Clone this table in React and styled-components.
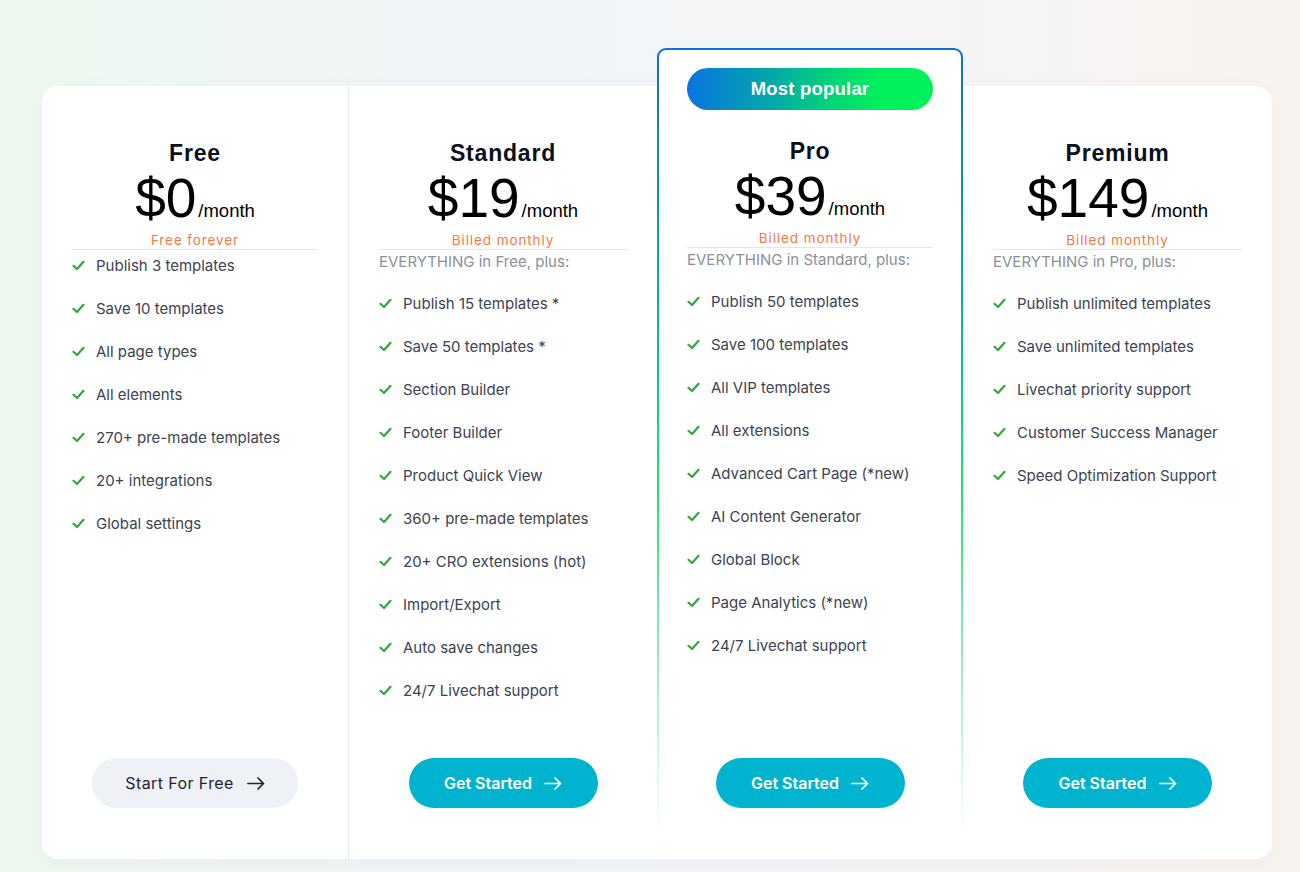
import React from 'react';
import styled, { createGlobalStyle } from 'styled-components';

const GlobalStyle = createGlobalStyle`
    html, body {
        margin: 0;
        padding: 0;
    }
    body {
        min-height: 872px;
        background: linear-gradient(90deg, #ecf8ef 0%, #f1f5f7 30%, #f4f5f7 65%, #f9f3ef 100%);
        font-family: 'Liberation Sans', Arial, sans-serif;
    }
`;

const Page = styled.div`
    padding: 86px 28px 0 42px;
    min-height: 872px;
    box-sizing: border-box;
`;

const Board = styled.div`
    width: 1230px;
    display: grid;
    grid-template-columns: 306px 309px 306px 309px;
    background: #fff;
    border-radius: 16px;
    box-shadow: 0 6px 24px rgba(20, 30, 50, 0.03);
`;

const Plan = styled.div`
    display: flex;
    flex-direction: column;
    align-items: center;
    padding: 56px 30px 51px;
    box-sizing: border-box;
    border-left: ${(p) => (p.$divider ? '1px solid #e6e8ec' : 'none')};
`;

const ProPlan = styled(Plan)`
    margin-top: -38px;
    padding: 18px 28px 51px;
    border: 2px solid transparent;
    border-bottom: 0;
    border-radius: 9px 9px 0 0;
    background:
        linear-gradient(#fff, #fff) padding-box,
        linear-gradient(180deg, #0a6fe2 0%, #05b0a0 30%, #1ee36e 55%, rgba(0, 230, 118, 0.35) 80%, rgba(0, 230, 118, 0) 97%) border-box;
`;

const Badge = styled.div`
    width: 100%;
    height: 42px;
    border-radius: 21px;
    display: flex;
    align-items: center;
    justify-content: center;
    background: linear-gradient(90deg, #0975e0 0%, #04a9a8 35%, #00d379 58%, #00f05c 78%, #00f25a 100%);
    color: #fff;
    font-weight: 700;
    font-size: 18.5px;
    letter-spacing: 0.2px;
    margin-bottom: 30px;
`;

const Title = styled.h3`
    margin: 0;
    font-size: 23px;
    line-height: 23px;
    font-weight: 700;
    letter-spacing: 0.8px;
    color: #0b0f1c;
`;

const PriceRow = styled.div`
    display: flex;
    align-items: baseline;
    margin-top: 6px;
    line-height: 55px;
    height: 55px;
    color: #000;
`;

const Amount = styled.span`
    font-size: 55px;
`;

const Period = styled.span`
    font-size: 18.5px;
    margin-left: 2px;
`;

const Note = styled.div`
    margin-top: 5px;
    width: 100%;
    text-align: center;
    font-family: Inter, 'Liberation Sans', sans-serif;
    font-size: 13.5px;
    line-height: 18px;
    letter-spacing: 0.9px;
    color: #f9773f;
    border-bottom: 1px solid #e4e6ea;
`;

const List = styled.ul`
    list-style: none;
    margin: 0;
    padding: ${(p) => (p.$plain ? '4px' : '2px')} 0 0;
    width: 100%;
    display: flex;
    flex-direction: column;
    gap: 20px;
    font-family: Inter, 'Liberation Sans', sans-serif;
    font-size: 15px;
`;

const Lead = styled.li`
    line-height: 20px;
    color: #8b9099;
`;

const Item = styled.li`
    display: flex;
    align-items: center;
    gap: 11px;
    line-height: 23px;
    color: #3c4352;
`;

const Tick = () => (
    <svg width="13" height="11" viewBox="0 0 13 11" fill="none">
        <path d="M1.5 5.8 L5 9 L11.5 1.8" stroke="#2fa83c" strokeWidth="2.2" strokeLinecap="round" strokeLinejoin="round" />
    </svg>
);

const Arrow = () => (
    <svg width="18" height="13" viewBox="0 0 18 13" fill="none">
        <path d="M1 6.5 H16.5 M11 1 L16.5 6.5 L11 12" stroke="currentColor" strokeWidth="1.7" strokeLinecap="round" strokeLinejoin="round" />
    </svg>
);

const Button = styled.button`
    margin-top: auto;
    height: 50px;
    min-width: ${(p) => (p.$free ? '206px' : '189px')};
    border: none;
    border-radius: 25px;
    display: flex;
    align-items: center;
    justify-content: center;
    gap: ${(p) => (p.$free ? '13px' : '12px')};
    font-family: Inter, 'Liberation Sans', sans-serif;
    font-size: 16px;
    font-weight: ${(p) => (p.$free ? 400 : 600)};
    letter-spacing: ${(p) => (p.$free ? '0.4px' : '0')};
    background: ${(p) => (p.$free ? '#eef1f5' : '#00b4cf')};
    color: ${(p) => (p.$free ? '#1e2533' : '#fff')};
    cursor: pointer;
`;

const Spacer = styled.div`
    height: 56px;
    flex-shrink: 0;
`;

const plans = [
    {
        name: 'Free',
        price: '$0',
        note: 'Free forever',
        features: [
            'Publish 3 templates',
            'Save 10 templates',
            'All page types',
            'All elements',
            '270+ pre-made templates',
            '20+ integrations',
            'Global settings',
        ],
        cta: 'Start For Free',
        free: true,
    },
    {
        name: 'Standard',
        price: '$19',
        note: 'Billed monthly',
        lead: 'EVERYTHING in Free, plus:',
        features: [
            'Publish 15 templates *',
            'Save 50 templates *',
            'Section Builder',
            'Footer Builder',
            'Product Quick View',
            '360+ pre-made templates',
            '20+ CRO extensions (hot)',
            'Import/Export',
            'Auto save changes',
            '24/7 Livechat support',
        ],
        cta: 'Get Started',
        divider: true,
    },
    {
        name: 'Pro',
        price: '$39',
        note: 'Billed monthly',
        lead: 'EVERYTHING in Standard, plus:',
        features: [
            'Publish 50 templates',
            'Save 100 templates',
            'All VIP templates',
            'All extensions',
            'Advanced Cart Page (*new)',
            'AI Content Generator',
            'Global Block',
            'Page Analytics (*new)',
            '24/7 Livechat support',
        ],
        cta: 'Get Started',
        popular: true,
    },
    {
        name: 'Premium',
        price: '$149',
        note: 'Billed monthly',
        lead: 'EVERYTHING in Pro, plus:',
        features: [
            'Publish unlimited templates',
            'Save unlimited templates',
            'Livechat priority support',
            'Customer Success Manager',
            'Speed Optimization Support',
        ],
        cta: 'Get Started',
    },
];

const PlanCard = ({ plan }) => {
    const Wrap = plan.popular ? ProPlan : Plan;
    return (
        <Wrap $divider={plan.divider}>
            {plan.popular && <Badge>Most popular</Badge>}
            <Title>{plan.name}</Title>
            <PriceRow>
                <Amount>{plan.price}</Amount>
                <Period>/month</Period>
            </PriceRow>
            <Note>{plan.note}</Note>
            <List $plain={!plan.lead}>
                {plan.lead && <Lead>{plan.lead}</Lead>}
                {plan.features.map((f) => (
                    <Item key={f}>
                        <Tick />
                        {f}
                    </Item>
                ))}
            </List>
            <Spacer />
            <Button $free={plan.free}>
                {plan.cta}
                <Arrow />
            </Button>
        </Wrap>
    );
};

export default function App() {
    return (
        <>
            <GlobalStyle />
            <Page>
                <Board>
                    {plans.map((p) => (
                        <PlanCard key={p.name} plan={p} />
                    ))}
                </Board>
            </Page>
        </>
    );
}
